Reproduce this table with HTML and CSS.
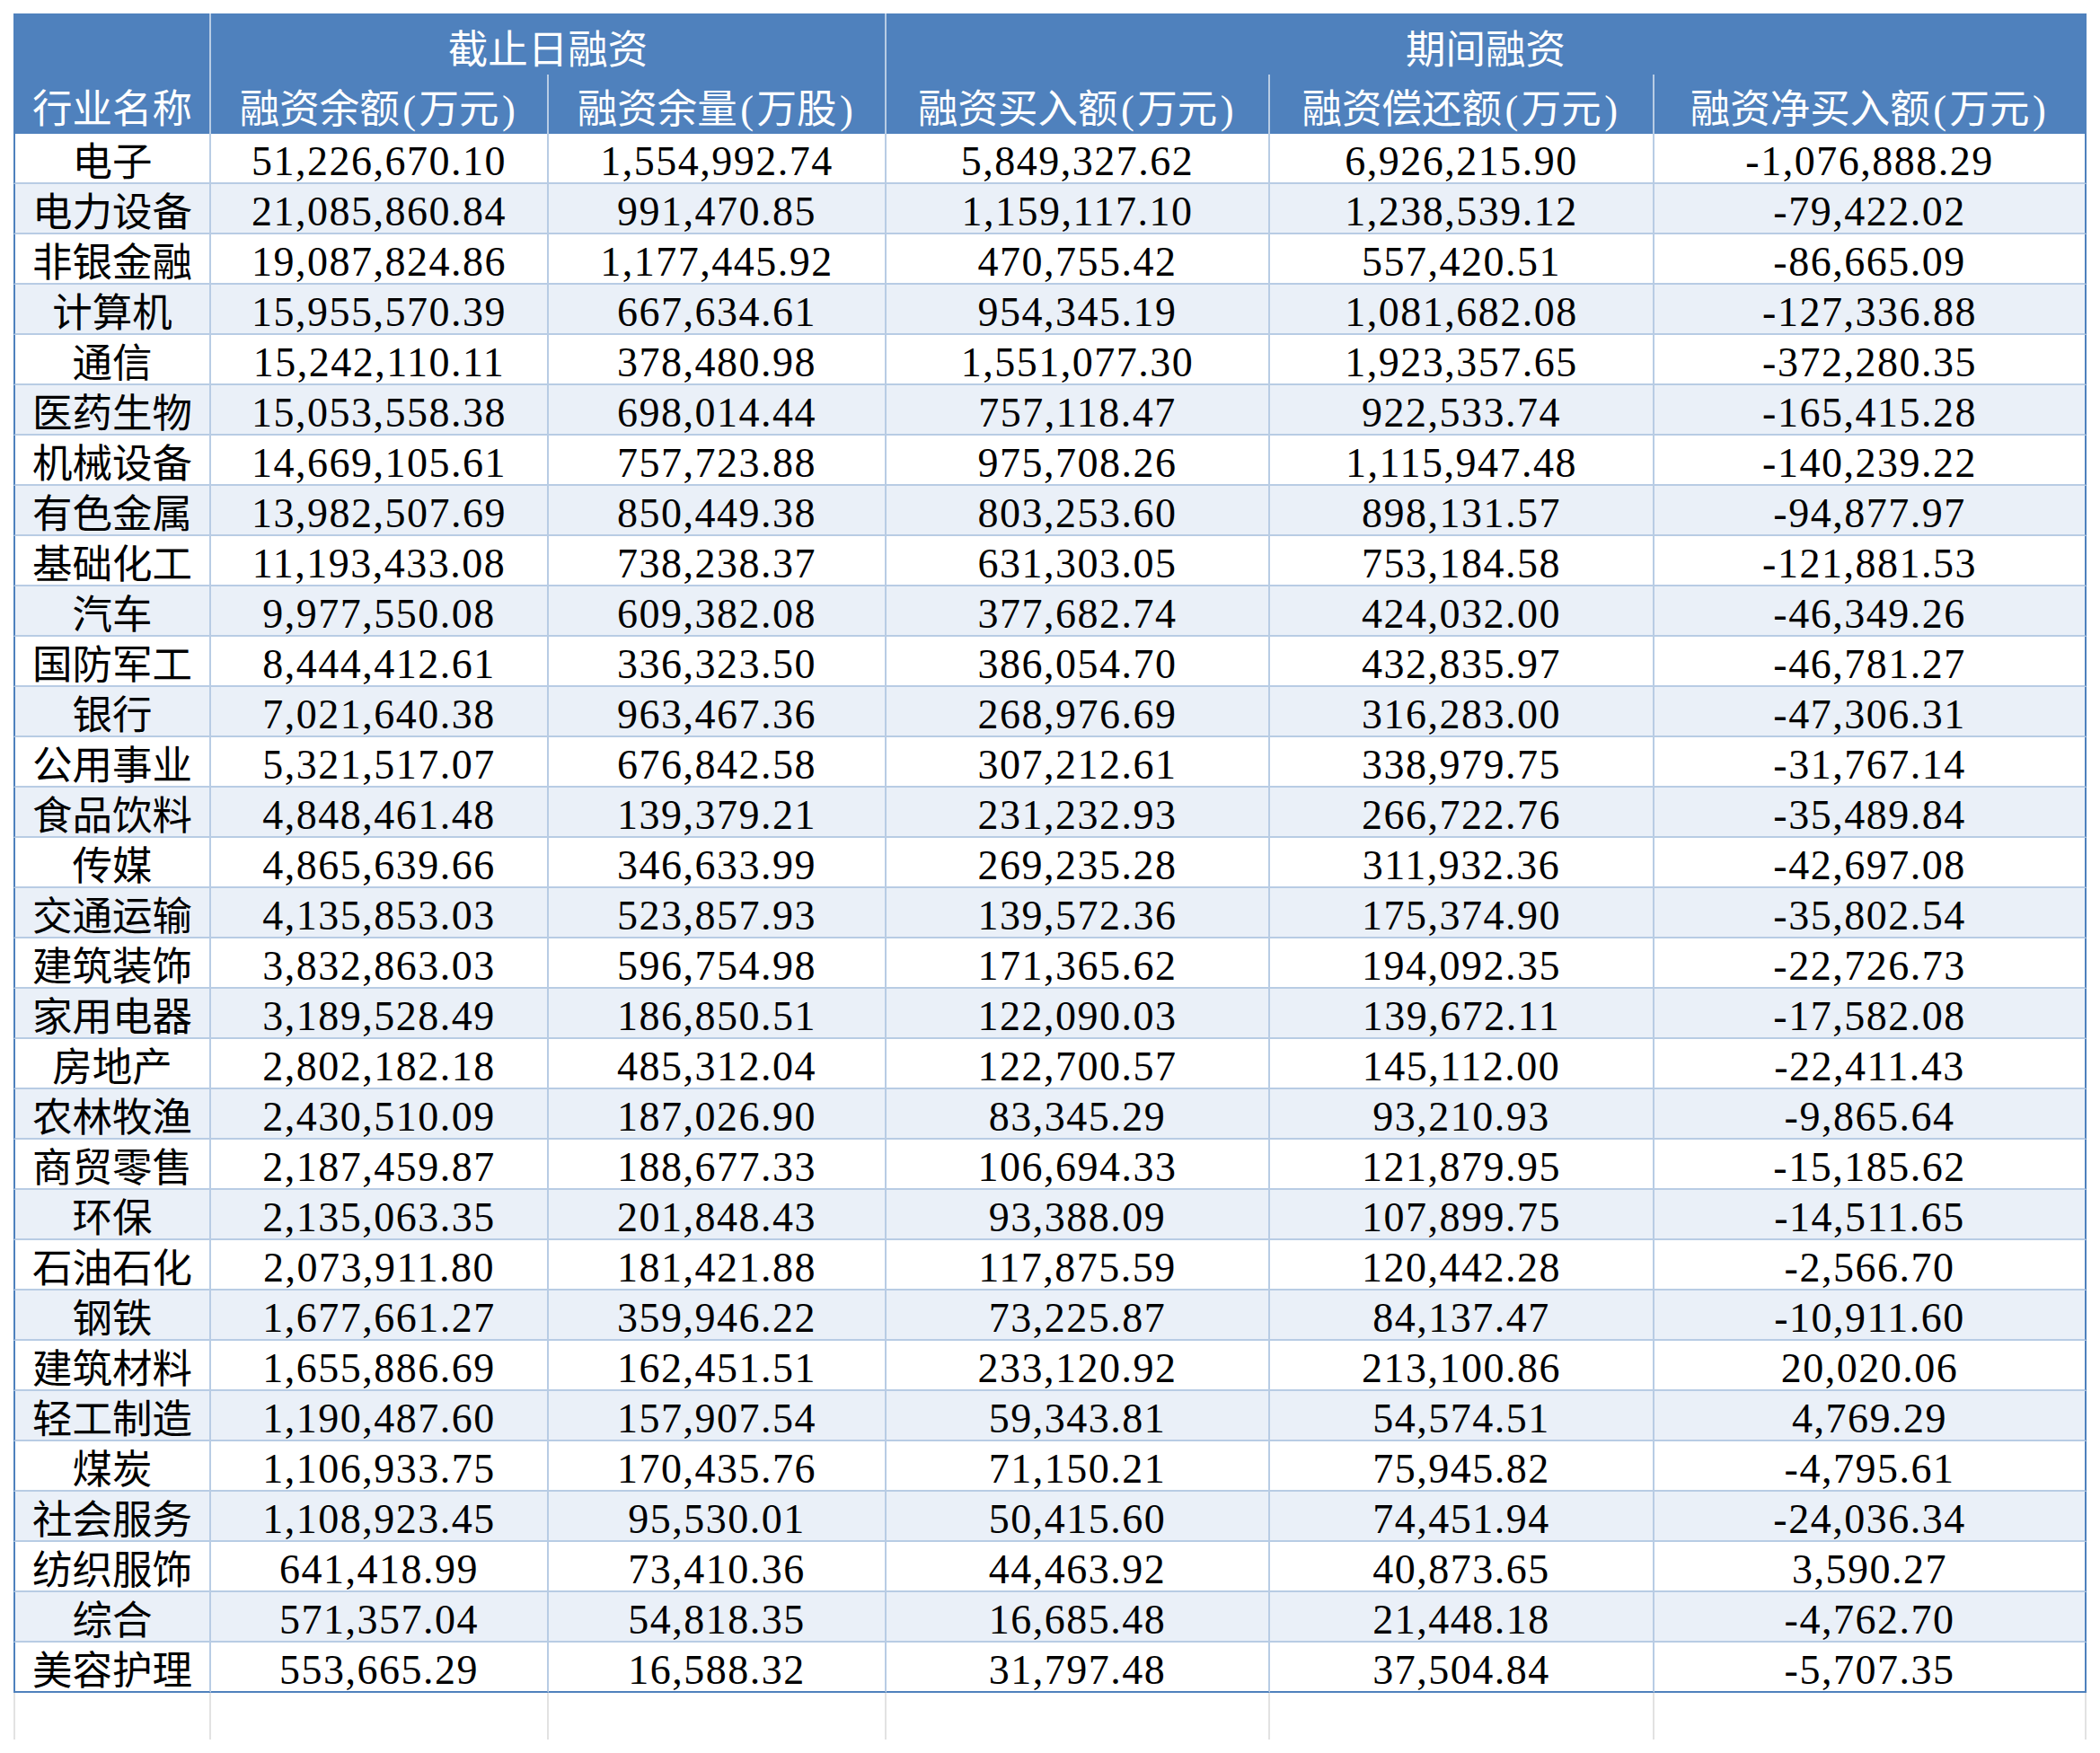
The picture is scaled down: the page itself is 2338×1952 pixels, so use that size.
FILE: index.html
```html
<!DOCTYPE html>
<html lang="zh-CN">
<head>
<meta charset="utf-8">
<title>行业融资统计</title>
<link rel="stylesheet" href="styles.css">
</head>
<body>
<div class="sheet">
  <div class="grid">
    <div class="row head">
      <div class="c h h-name">行业名称</div>
      <div class="c h h-grp1">截止日融资</div>
      <div class="c h h-grp2">期间融资</div>
    </div>
    <div class="row head2">
      <div class="c h h2">融资余额<span class="pr">(</span>万元<span class="pr">)</span></div>
      <div class="c h h2">融资余量<span class="pr">(</span>万股<span class="pr">)</span></div>
      <div class="c h h2">融资买入额<span class="pr">(</span>万元<span class="pr">)</span></div>
      <div class="c h h2">融资偿还额<span class="pr">(</span>万元<span class="pr">)</span></div>
      <div class="c h h2">融资净买入额<span class="pr">(</span>万元<span class="pr">)</span></div>
    </div>

    <div class="row"><div class="c lbl">电子</div><div class="c d">51,226,670.10</div><div class="c d">1,554,992.74</div><div class="c d">5,849,327.62</div><div class="c d">6,926,215.90</div><div class="c d">-1,076,888.29</div></div>
    <div class="row alt"><div class="c lbl">电力设备</div><div class="c d">21,085,860.84</div><div class="c d">991,470.85</div><div class="c d">1,159,117.10</div><div class="c d">1,238,539.12</div><div class="c d">-79,422.02</div></div>
    <div class="row"><div class="c lbl">非银金融</div><div class="c d">19,087,824.86</div><div class="c d">1,177,445.92</div><div class="c d">470,755.42</div><div class="c d">557,420.51</div><div class="c d">-86,665.09</div></div>
    <div class="row alt"><div class="c lbl">计算机</div><div class="c d">15,955,570.39</div><div class="c d">667,634.61</div><div class="c d">954,345.19</div><div class="c d">1,081,682.08</div><div class="c d">-127,336.88</div></div>
    <div class="row"><div class="c lbl">通信</div><div class="c d">15,242,110.11</div><div class="c d">378,480.98</div><div class="c d">1,551,077.30</div><div class="c d">1,923,357.65</div><div class="c d">-372,280.35</div></div>
    <div class="row alt"><div class="c lbl">医药生物</div><div class="c d">15,053,558.38</div><div class="c d">698,014.44</div><div class="c d">757,118.47</div><div class="c d">922,533.74</div><div class="c d">-165,415.28</div></div>
    <div class="row"><div class="c lbl">机械设备</div><div class="c d">14,669,105.61</div><div class="c d">757,723.88</div><div class="c d">975,708.26</div><div class="c d">1,115,947.48</div><div class="c d">-140,239.22</div></div>
    <div class="row alt"><div class="c lbl">有色金属</div><div class="c d">13,982,507.69</div><div class="c d">850,449.38</div><div class="c d">803,253.60</div><div class="c d">898,131.57</div><div class="c d">-94,877.97</div></div>
    <div class="row"><div class="c lbl">基础化工</div><div class="c d">11,193,433.08</div><div class="c d">738,238.37</div><div class="c d">631,303.05</div><div class="c d">753,184.58</div><div class="c d">-121,881.53</div></div>
    <div class="row alt"><div class="c lbl">汽车</div><div class="c d">9,977,550.08</div><div class="c d">609,382.08</div><div class="c d">377,682.74</div><div class="c d">424,032.00</div><div class="c d">-46,349.26</div></div>
    <div class="row"><div class="c lbl">国防军工</div><div class="c d">8,444,412.61</div><div class="c d">336,323.50</div><div class="c d">386,054.70</div><div class="c d">432,835.97</div><div class="c d">-46,781.27</div></div>
    <div class="row alt"><div class="c lbl">银行</div><div class="c d">7,021,640.38</div><div class="c d">963,467.36</div><div class="c d">268,976.69</div><div class="c d">316,283.00</div><div class="c d">-47,306.31</div></div>
    <div class="row"><div class="c lbl">公用事业</div><div class="c d">5,321,517.07</div><div class="c d">676,842.58</div><div class="c d">307,212.61</div><div class="c d">338,979.75</div><div class="c d">-31,767.14</div></div>
    <div class="row alt"><div class="c lbl">食品饮料</div><div class="c d">4,848,461.48</div><div class="c d">139,379.21</div><div class="c d">231,232.93</div><div class="c d">266,722.76</div><div class="c d">-35,489.84</div></div>
    <div class="row"><div class="c lbl">传媒</div><div class="c d">4,865,639.66</div><div class="c d">346,633.99</div><div class="c d">269,235.28</div><div class="c d">311,932.36</div><div class="c d">-42,697.08</div></div>
    <div class="row alt"><div class="c lbl">交通运输</div><div class="c d">4,135,853.03</div><div class="c d">523,857.93</div><div class="c d">139,572.36</div><div class="c d">175,374.90</div><div class="c d">-35,802.54</div></div>
    <div class="row"><div class="c lbl">建筑装饰</div><div class="c d">3,832,863.03</div><div class="c d">596,754.98</div><div class="c d">171,365.62</div><div class="c d">194,092.35</div><div class="c d">-22,726.73</div></div>
    <div class="row alt"><div class="c lbl">家用电器</div><div class="c d">3,189,528.49</div><div class="c d">186,850.51</div><div class="c d">122,090.03</div><div class="c d">139,672.11</div><div class="c d">-17,582.08</div></div>
    <div class="row"><div class="c lbl">房地产</div><div class="c d">2,802,182.18</div><div class="c d">485,312.04</div><div class="c d">122,700.57</div><div class="c d">145,112.00</div><div class="c d">-22,411.43</div></div>
    <div class="row alt"><div class="c lbl">农林牧渔</div><div class="c d">2,430,510.09</div><div class="c d">187,026.90</div><div class="c d">83,345.29</div><div class="c d">93,210.93</div><div class="c d">-9,865.64</div></div>
    <div class="row"><div class="c lbl">商贸零售</div><div class="c d">2,187,459.87</div><div class="c d">188,677.33</div><div class="c d">106,694.33</div><div class="c d">121,879.95</div><div class="c d">-15,185.62</div></div>
    <div class="row alt"><div class="c lbl">环保</div><div class="c d">2,135,063.35</div><div class="c d">201,848.43</div><div class="c d">93,388.09</div><div class="c d">107,899.75</div><div class="c d">-14,511.65</div></div>
    <div class="row"><div class="c lbl">石油石化</div><div class="c d">2,073,911.80</div><div class="c d">181,421.88</div><div class="c d">117,875.59</div><div class="c d">120,442.28</div><div class="c d">-2,566.70</div></div>
    <div class="row alt"><div class="c lbl">钢铁</div><div class="c d">1,677,661.27</div><div class="c d">359,946.22</div><div class="c d">73,225.87</div><div class="c d">84,137.47</div><div class="c d">-10,911.60</div></div>
    <div class="row"><div class="c lbl">建筑材料</div><div class="c d">1,655,886.69</div><div class="c d">162,451.51</div><div class="c d">233,120.92</div><div class="c d">213,100.86</div><div class="c d">20,020.06</div></div>
    <div class="row alt"><div class="c lbl">轻工制造</div><div class="c d">1,190,487.60</div><div class="c d">157,907.54</div><div class="c d">59,343.81</div><div class="c d">54,574.51</div><div class="c d">4,769.29</div></div>
    <div class="row"><div class="c lbl">煤炭</div><div class="c d">1,106,933.75</div><div class="c d">170,435.76</div><div class="c d">71,150.21</div><div class="c d">75,945.82</div><div class="c d">-4,795.61</div></div>
    <div class="row alt"><div class="c lbl">社会服务</div><div class="c d">1,108,923.45</div><div class="c d">95,530.01</div><div class="c d">50,415.60</div><div class="c d">74,451.94</div><div class="c d">-24,036.34</div></div>
    <div class="row"><div class="c lbl">纺织服饰</div><div class="c d">641,418.99</div><div class="c d">73,410.36</div><div class="c d">44,463.92</div><div class="c d">40,873.65</div><div class="c d">3,590.27</div></div>
    <div class="row alt"><div class="c lbl">综合</div><div class="c d">571,357.04</div><div class="c d">54,818.35</div><div class="c d">16,685.48</div><div class="c d">21,448.18</div><div class="c d">-4,762.70</div></div>
    <div class="row last"><div class="c lbl">美容护理</div><div class="c d">553,665.29</div><div class="c d">16,588.32</div><div class="c d">31,797.48</div><div class="c d">37,504.84</div><div class="c d">-5,707.35</div></div>

    <div class="row fill"><div class="c"></div><div class="c"></div><div class="c"></div><div class="c"></div><div class="c"></div><div class="c"></div></div>
  </div>
</div>
</body>
</html>
```

FILE: styles.css
```css
html, body {
  margin: 0;
  padding: 0;
  background: #ffffff;
}

.sheet {
  padding: 15px 0 0 15px;
}

.grid {
  display: grid;
  grid-template-columns: 220px 376px 376px 427px 428px 481px;
  grid-template-rows: 68px 66px repeat(31, 56px) 52px;
  font-family: "Liberation Serif", "Noto Sans CJK SC", serif;
  color: #000000;
}

.row {
  display: contents;
}

.c {
  box-sizing: border-box;
  text-align: center;
  white-space: nowrap;
  overflow: hidden;
  border-right: 2px solid #b8cce4;
}

.row > .c:last-child {
  border-right-color: #4f81bd;
}

/* header */
.h {
  background: #4f81bd;
  color: #ffffff;
  font-size: 44.5px;
  line-height: 46px;
  padding-top: 16px;
}

.pr {
  padding: 0 3.5px;
}

.h-name {
  grid-row: 1 / 3;
  border-left: 2px solid #4f81bd;
  padding-top: 84px;
}

.h-grp1 {
  grid-column: 2 / 4;
  padding-top: 18px;
}

.h-grp2 {
  grid-column: 4 / 7;
  padding-top: 18px;
}

.head > .h-name {
  border-right-color: #b8cce4;
}

.head > .h-grp2 {
  border-right-color: #4f81bd;
}

/* body rows */
.lbl,
.d {
  border-bottom: 2px solid #b8cce4;
  line-height: 46px;
}

.lbl {
  font-size: 44.5px;
  padding-top: 9px;
  border-left: 2px solid #4f81bd;
}

.d {
  font-size: 46px;
  letter-spacing: 1.5px;
  padding-top: 8px;
}

.alt > .c {
  background: #eaf0f8;
}

.last > .c {
  border-bottom-color: #4f81bd;
}

/* empty sheet row below the table */
.fill > .c {
  border-right: 2px solid #e2e2e2;
}

.fill > .c:first-child {
  border-left: 2px solid #e2e2e2;
}

.fill > .c:last-child {
  border-right-color: #e2e2e2;
}
```
